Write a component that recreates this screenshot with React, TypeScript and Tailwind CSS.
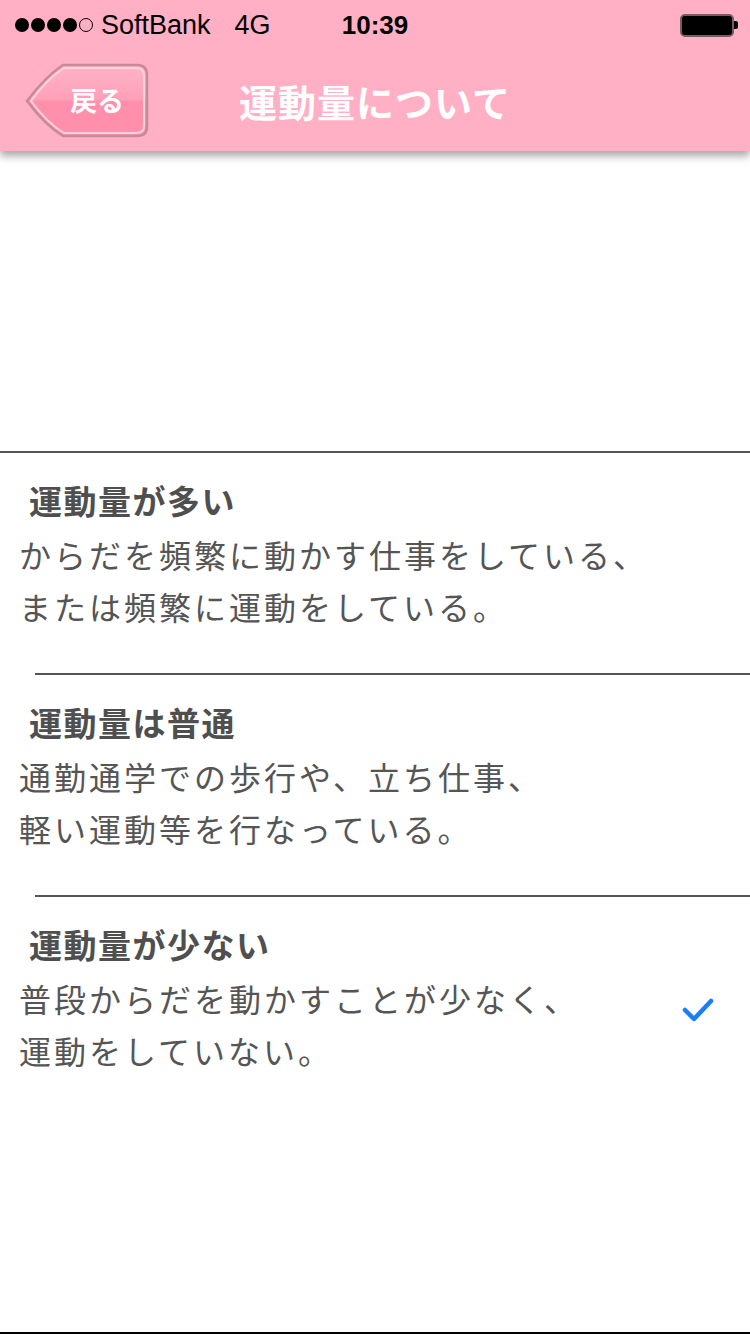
import React from 'react';

const jp = { fontFamily: '"Noto Sans CJK JP", "Noto Sans", sans-serif' };
const latin = { fontFamily: '"Liberation Sans", Arial, sans-serif' };

type Option = {
    title: string;
    lines: string[];
    checked?: boolean;
};

const options: Option[] = [
    { title: '運動量が多い', lines: ['からだを頻繁に動かす仕事をしている、', 'または頻繁に運動をしている。'] },
    { title: '運動量は普通', lines: ['通勤通学での歩行や、立ち仕事、', '軽い運動等を行なっている。'] },
    { title: '運動量が少ない', lines: ['普段からだを動かすことが少なく、', '運動をしていない。'], checked: true },
];

function StatusBar() {
    return (
        <div className="grid h-[50px] grid-cols-[1fr_auto_1fr] items-center text-[26px] text-black" style={latin}>
            <div className="flex items-center pl-[15px]">
                {/* signal dots */}
                <div className="flex gap-[2px]">
                    <span className="h-[14px] w-[14px] rounded-full bg-black" />
                    <span className="h-[14px] w-[14px] rounded-full bg-black" />
                    <span className="h-[14px] w-[14px] rounded-full bg-black" />
                    <span className="h-[14px] w-[14px] rounded-full bg-black" />
                    <span className="h-[14px] w-[14px] rounded-full border-[1.5px] border-black" />
                </div>
                <span className="ml-[8px] text-[27px]">SoftBank</span>
                <span className="ml-[24px] text-[27px]">4G</span>
            </div>
            <div className="font-bold">10:39</div>
            <div className="flex items-center justify-end pr-[12px]">
                <div className="h-[23px] w-[54px] rounded-[5px] border-2 border-[#7a5a62] bg-black" />
                <div className="h-[8px] w-[4px] rounded-r-[2px] bg-black" />
            </div>
        </div>
    );
}

function BackButton() {
    return (
        <div className="relative h-[76px] w-[126px]">
            <svg width="126" height="76" viewBox="0 0 126 76" className="absolute left-0 top-0">
                <defs>
                    <linearGradient id="btn" x1="0" y1="0" x2="0" y2="1">
                        <stop offset="0" stopColor="#ffb4c7" />
                        <stop offset="0.48" stopColor="#ffa0b8" />
                        <stop offset="0.52" stopColor="#ff8fab" />
                        <stop offset="1" stopColor="#ff8fab" />
                    </linearGradient>
                </defs>
                <path
                    d="M2 38 Q20 14 38 2 L112 2 Q122 2 122 12 L122 64 Q122 73 112 73 L38 73 Q20 62 2 38 Z"
                    fill="url(#btn)"
                    stroke="#c88a9a"
                    strokeWidth="2.5"
                />
                <path
                    d="M6 38 Q22 16 39 5 L111 5 Q119 5 119 13 L119 63 Q119 70 111 70 L39 70 Q22 60 6 38 Z"
                    fill="none"
                    stroke="#ffd3de"
                    strokeWidth="2"
                />
            </svg>
            <span className="absolute left-[45px] top-[19px] text-[27px] leading-[36px] font-bold text-white" style={jp}>
                戻る
            </span>
        </div>
    );
}

function CheckMark() {
    return (
        <svg width="32" height="26" viewBox="0 0 32 26">
            <polyline points="3,13 12,22 29,4" fill="none" stroke="#1a7dfb" strokeWidth="4.5" strokeLinecap="round" strokeLinejoin="round" />
        </svg>
    );
}

export default function App() {
    return (
        <div className="relative flex h-[1334px] w-[750px] flex-col overflow-hidden bg-white">
            <div className="relative z-10 h-[151px] bg-[#ffb0c5] shadow-[0_5px_8px_rgba(0,0,0,0.35)]">
                <StatusBar />
                <div className="grid h-[101px] grid-cols-[1fr_auto_1fr] items-center">
                    <div className="pl-[25px]">
                        <BackButton />
                    </div>
                    <h1 className="text-[38px] font-bold tracking-[1px] text-white" style={jp}>
                        運動量について
                    </h1>
                    <div />
                </div>
            </div>

            <div className="h-[300px]" />

            <div className="border-t-2 border-[#555555]" style={jp}>
                {options.map((opt, i) => (
                    <div key={opt.title} className="relative h-[222px]">
                        <div className="flex items-start">
                            <div className="flex-1">
                                <div className="pl-[29px] pt-[26px] text-[33px] leading-[42px] font-bold tracking-[1.5px] text-[#4f4f4f]">
                                    {opt.title}
                                </div>
                                <div className="mt-[7px] pl-[19px] text-[32px] leading-[52px] tracking-[3px] text-[#555555]">
                                    {opt.lines.map((l) => (
                                        <div key={l}>{l}</div>
                                    ))}
                                </div>
                            </div>
                            {opt.checked && (
                                <div className="pr-[36px] pt-[100px]">
                                    <CheckMark />
                                </div>
                            )}
                        </div>
                        {i < options.length - 1 && <div className="absolute bottom-0 left-[35px] right-0 h-[2px] bg-[#555555]" />}
                    </div>
                ))}
            </div>

            <div className="flex-1" />
            <div className="h-[2px] bg-black" />
        </div>
    );
}
